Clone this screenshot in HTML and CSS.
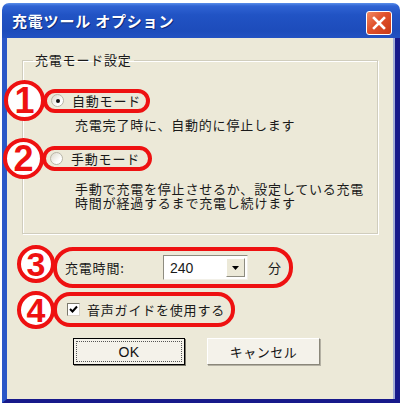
FILE: index.html
```html
<!DOCTYPE html>
<html lang="ja">
<head>
    <meta charset="UTF-8">
    <title>充電ツール オプション</title>
    <link rel="stylesheet" href="styles.css">
</head>
<body>
    <div class="window">
        <div class="titlebar">
            <span class="title">充電ツール オプション</span>
            <span class="close">
                <svg width="14" height="14" viewBox="0 0 14 14"><path d="M2 2 L12 12 M12 2 L2 12" stroke="#fff" stroke-width="2.6" stroke-linecap="square"/></svg>
            </span>
        </div>
        <div class="frame">
            <div class="client">
                <fieldset class="group">
                    <legend>充電モード設定</legend>
                    <div class="mark-row row-1">
                        <span class="mark">1</span>
                        <label class="pill pill-radio"><span class="radio checked"></span>自動モード</label>
                    </div>
                    <p class="desc desc-1">充電完了時に、自動的に停止します</p>
                    <div class="mark-row row-2">
                        <span class="mark">2</span>
                        <label class="pill pill-radio pill-2"><span class="radio"></span>手動モード</label>
                    </div>
                    <p class="desc desc-2">手動で充電を停止させるか、設定している充電<br>時間が経過するまで充電し続けます</p>
                </fieldset>

                <div class="mark-row row-3">
                    <span class="mark small">3</span>
                    <div class="pill pill-time">
                        <span class="time-label">充電時間:</span>
                        <span class="select"><span class="select-value">240</span><span class="select-btn"><svg width="7" height="4" viewBox="0 0 7 4"><path d="M0 0 H7 L3.5 4 Z" fill="#000"/></svg></span></span>
                        <span class="unit">分</span>
                    </div>
                </div>

                <div class="mark-row row-4">
                    <span class="mark small">4</span>
                    <label class="pill pill-check">
                        <span class="checkbox"><svg width="9" height="9" viewBox="0 0 9 9"><path d="M1 4 L3.5 6.5 L8 1.5" fill="none" stroke="#000" stroke-width="2"/></svg></span>
                        音声ガイドを使用する
                    </label>
                </div>

                <div class="buttons">
                    <button class="btn btn-default"><span class="focus">OK</span></button>
                    <button class="btn">キャンセル</button>
                </div>
            </div>
        </div>
    </div>
</body>
</html>
```

FILE: styles.css
```css
body { margin: 0; background: #fff; font-family: "Noto Sans CJK JP", sans-serif; font-size: 13px; letter-spacing: 0.8px; color: #1a1a1a; }

.window { width: 398px; margin: 3px 0 0 2px; display: flex; flex-direction: column; }

.titlebar { height: 35px; display: flex; align-items: center; justify-content: space-between; padding: 0 8px 0 10px; border-radius: 7px 7px 0 0;
    background: linear-gradient(#5a8eea 0, #2f63d3 3px, #2153c4 12px, #1d4cbb 28px, #2352c2 35px); }
.title { color: #fff; font-weight: bold; font-size: 15px; letter-spacing: 0.8px; text-shadow: 1px 1px 0 #0c2a7a; }
.close { width: 24px; height: 22px; border: 1px solid #fff; border-radius: 3px; display: flex; align-items: center; justify-content: center;
    background: linear-gradient(135deg, #f08a64, #e0502a 45%, #c83a18); margin-top: 4px; }

.frame { border-left: 5px solid #2a57c7; border-right: 5px solid #17198a; border-bottom: 4px solid #17198a; }
.client { background: #ece9d8; height: 361px; border-right: 2px solid #a1acd6; padding-top: 14px; box-sizing: border-box; }

.group { margin: 0 15px 0 15px; padding: 0 0 23px 0; border: 1px solid #d0cdbd; box-shadow: inset 1px 1px 0 #fff, 1px 1px 0 #fff; }
.group legend { margin-left: 10px; padding: 0 2px; line-height: 16px; }

.mark-row { display: flex; align-items: center; }
.mark { flex: none; width: 33px; height: 33px; border: 4px solid #ee1111; border-radius: 50%; background: #fff; color: #ee1111;
    font-family: "Liberation Sans", sans-serif; font-weight: bold; font-size: 36px; line-height: 33px; text-align: center; letter-spacing: 0;
    margin: -8px 0; position: relative; z-index: 1; }
.mark.small { width: 30px; height: 30px; line-height: 30px; font-size: 34px; }

.pill { display: flex; align-items: center; border: 4px solid #ee1111; border-radius: 14px; box-sizing: border-box; }

.row-1 { margin: 20px 0 0 -19px; }
.row-2 { margin: 14px 0 0 -20px; }
.row-1 .pill, .row-2 .pill { margin-left: -2px; }
.pill-radio { width: 107px; height: 24px; padding: 0 4px; gap: 8px; }
.pill-2 { width: 110px; height: 25px; }
.radio { width: 11px; height: 11px; border: 1px solid #b9b6a8; border-radius: 50%; background: linear-gradient(135deg, #dcd9cc, #fff 70%); display: flex; align-items: center; justify-content: center; }
.radio.checked::after { content: ""; width: 4px; height: 4px; border-radius: 50%; background: #111; }

.desc { margin: 0; padding-left: 52px; }
.desc-1 { margin-top: 5px; line-height: 14px; }
.desc-2 { margin-top: 11px; line-height: 14px; }

.row-3 { margin: 13px 0 0 10px; align-items: flex-start; }
.row-3 .mark { margin: -2px 0 0 0; }
.pill-time { width: 240px; height: 41px; margin-left: -2px; padding: 0 0 0 8px; border-radius: 20px; }
.time-label { width: 64px; }
.select { margin-left: 34px; width: 85px; height: 25px; box-sizing: border-box; border: 1px solid #8e8c80; border-right-color: #f2f0e8; border-bottom-color: #f2f0e8;
    background: #fff; display: flex; align-items: center; justify-content: space-between; padding: 0 2px 0 6px; }
.select-value { font-family: "Liberation Sans", sans-serif; font-size: 14px; letter-spacing: 0; }
.select-btn { width: 19px; height: 19px; box-sizing: border-box; background: #ece9d8; border: 1px solid #fff; border-right-color: #8e8c80; border-bottom-color: #8e8c80;
    display: flex; align-items: center; justify-content: center; }
.unit { margin-left: 20px; }

.row-4 { margin: 4px 0 0 10px; }
.pill-check { height: 35px; margin-left: -2px; padding: 0 6px 0 10px; gap: 7px; border-radius: 17px; }
.checkbox { width: 13px; height: 13px; box-sizing: border-box; border: 1px solid #7a786c; border-right-color: #d8d5c8; border-bottom-color: #d8d5c8; background: #fff;
    display: flex; align-items: center; justify-content: center; }

.buttons { display: flex; gap: 22px; margin: 11px 0 0 66px; }
.btn { width: 113px; height: 27px; padding: 0; font-family: "Noto Sans CJK JP", sans-serif; font-size: 13px; letter-spacing: 0.5px; color: #111;
    background: #f4f2ea; border: 1px solid #fff; border-right-color: #8a877a; border-bottom-color: #8a877a; box-shadow: 1px 1px 0 #b4b1a4; }
.btn-default { width: 112px; border: 1px solid #000; box-shadow: 1px 1px 0 #7a786c; padding: 2px; }
.btn-default .focus { display: flex; align-items: center; justify-content: center; height: 100%; box-sizing: border-box; border: 1px dotted #555;
    font-family: "Liberation Sans", sans-serif; font-size: 14px; }
```
